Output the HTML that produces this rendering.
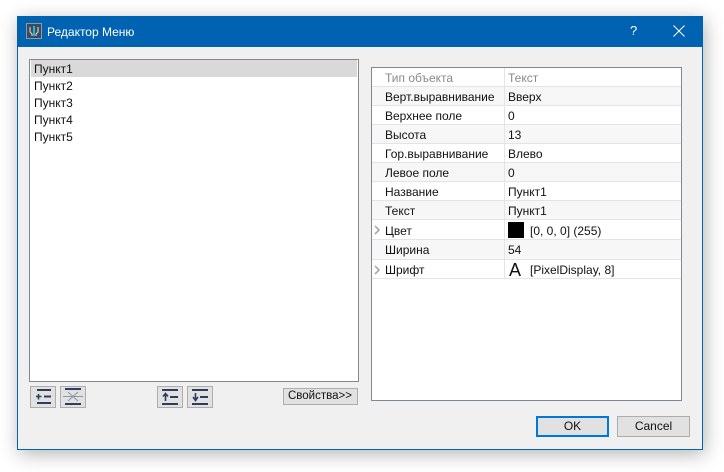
<!DOCTYPE html>
<html><head><meta charset="utf-8"><style>
html,body{margin:0;padding:0;background:#fff;width:724px;height:472px;overflow:hidden}
body{position:relative;font-family:"Liberation Sans",sans-serif;font-size:12px;color:#111}
div{position:absolute;box-sizing:border-box}
.t{white-space:nowrap;line-height:16px;height:16px}
.line{background:#e4e4e4;height:1px;left:372px;width:309px}
.btn{background:#e1e1e1;border:1px solid #adadad}
</style></head><body>
<div style="left:17px;top:16px;width:686px;height:434px;background:#f0f0f0;border:1px solid #0063b1;box-shadow:2px 4px 18px rgba(0,0,0,.3)"></div>
<div style="left:17px;top:16px;width:686px;height:31px;background:#0063b1"></div>
<svg style="position:absolute;left:26px;top:23px" width="16" height="16" viewBox="0 0 16 16">
<rect x=".5" y=".5" width="15" height="15" fill="#3b4a5c" stroke="#8d99a6"/>
<path d="M4 4v5l2 2v2M12 4v5l-2 2v2" stroke="#c5ccd2" stroke-width="1.200" fill="none"/>
<path d="M8 3v10" stroke="#2bb5c8" stroke-width="2"/></svg>
<div class="t" style="left:47px;top:24px;color:#fff;font-size:12px">Редактор Меню</div>
<div class="t" style="left:630px;top:23px;color:#fff;font-size:13px">?</div>
<svg style="position:absolute;left:673px;top:25px" width="12" height="12" viewBox="0 0 12 12"><path d="M.5 .5L11.500 11.500M11.500 .5L.5 11.500" stroke="#fff" fill="none"/></svg>

<div style="left:29px;top:59px;width:330px;height:323px;background:#fff;border:1px solid #828790"></div>
<div style="left:31px;top:60px;width:326px;height:17px;background:#d9d9d9"></div>
<div class="t" style="left:34px;top:61px">Пункт1</div>
<div class="t" style="left:34px;top:78px">Пункт2</div>
<div class="t" style="left:34px;top:95px">Пункт3</div>
<div class="t" style="left:34px;top:112px">Пункт4</div>
<div class="t" style="left:34px;top:129px">Пункт5</div>

<div class="btn" style="left:30px;top:386px;width:26px;height:22px"></div>
<div class="btn" style="left:60px;top:386px;width:26px;height:22px"></div>
<div class="btn" style="left:157px;top:386px;width:26px;height:22px"></div>
<div class="btn" style="left:187px;top:386px;width:26px;height:22px"></div>
<svg style="position:absolute;left:30px;top:386px" width="190" height="22" viewBox="0 0 190 22" fill="none" stroke="#2c3e5c">
<g stroke-width="2">
<path d="M7 4h14M7 17h14M14 10.500h7"/>
<path d="M35 3h16M35 18h16"/>
<path d="M132 4h16M132 18h16M140 11h8"/>
<path d="M162 4h16M162 18h16M170 11h8"/>
</g>
<path d="M6 10.500h5.500M8.500 8v5.500" stroke-width="1.600"/>
<path d="M33 10.500h20M38 6l10 9M48 6l-10 9" stroke="#8c95a3"/>
<path d="M135.500 15V8M133 10.500L135.500 7.500l2.500 3" stroke-width="1.600"/>
<path d="M165.500 7v7M163 11L165.500 14.500l2.500-3.500" stroke-width="1.600"/>
</svg>
<div class="btn" style="left:283px;top:388px;width:75px;height:17px;font-size:11.500px;line-height:15px;padding-left:4px;white-space:nowrap">Свойства&gt;&gt;</div>

<div style="left:371px;top:67px;width:311px;height:334px;background:#fff;border:1px solid #828790"></div>
<div style="left:372px;top:87px;width:309px;height:18px;background:#f7f7f7"></div>
<div style="left:372px;top:125px;width:309px;height:18px;background:#f7f7f7"></div>
<div style="left:372px;top:163px;width:309px;height:18px;background:#f7f7f7"></div>
<div style="left:372px;top:201px;width:309px;height:18px;background:#f7f7f7"></div>
<div style="left:372px;top:240px;width:309px;height:19px;background:#f7f7f7"></div>
<div class="line" style="top:86px"></div><div class="line" style="top:105px"></div><div class="line" style="top:124px"></div><div class="line" style="top:143px"></div><div class="line" style="top:162px"></div><div class="line" style="top:181px"></div><div class="line" style="top:200px"></div><div class="line" style="top:219px"></div><div class="line" style="top:239px"></div><div class="line" style="top:259px"></div><div class="line" style="top:278px"></div>
<div style="left:504px;top:68px;width:1px;height:210px;background:#e4e4e4"></div>

<div class="t" style="left:385px;top:70px;color:#8a8a8a">Тип объекта</div><div class="t" style="left:508px;top:70px;color:#8a8a8a">Текст</div>
<div class="t" style="left:385px;top:89px">Верт.выравнивание</div><div class="t" style="left:508px;top:89px">Вверх</div>
<div class="t" style="left:385px;top:108px">Верхнее поле</div><div class="t" style="left:508px;top:108px">0</div>
<div class="t" style="left:385px;top:127px">Высота</div><div class="t" style="left:508px;top:127px">13</div>
<div class="t" style="left:385px;top:146px">Гор.выравнивание</div><div class="t" style="left:508px;top:146px">Влево</div>
<div class="t" style="left:385px;top:165px">Левое поле</div><div class="t" style="left:508px;top:165px">0</div>
<div class="t" style="left:385px;top:184px">Название</div><div class="t" style="left:508px;top:184px">Пункт1</div>
<div class="t" style="left:385px;top:203px">Текст</div><div class="t" style="left:508px;top:203px">Пункт1</div>
<div class="t" style="left:385px;top:223px">Цвет</div>
<div style="left:508px;top:222px;width:16px;height:16px;background:#000"></div>
<div class="t" style="left:530px;top:223px">[0, 0, 0] (255)</div>
<div class="t" style="left:385px;top:242px">Ширина</div><div class="t" style="left:508px;top:242px">54</div>
<div class="t" style="left:385px;top:262px">Шрифт</div>
<div class="t" style="left:509px;top:261px;font-size:18px;line-height:18px;height:18px">A</div>
<div class="t" style="left:530px;top:262px">[PixelDisplay, 8]</div>
<svg style="position:absolute;left:374px;top:225px" width="8" height="54" viewBox="0 0 8 54" fill="none" stroke="#a0a0a0" stroke-width="1.500"><path d="M1 1l4 4-4 4M1 41l4 4-4 4"/></svg>

<div style="left:536px;top:416px;width:73px;height:21px;background:#e1e1e1;border:2px solid #0078d7;text-align:center;line-height:17px">OK</div>
<div class="btn" style="left:617px;top:416px;width:73px;height:21px;text-align:center;line-height:19px">Cancel</div>
</body></html>
